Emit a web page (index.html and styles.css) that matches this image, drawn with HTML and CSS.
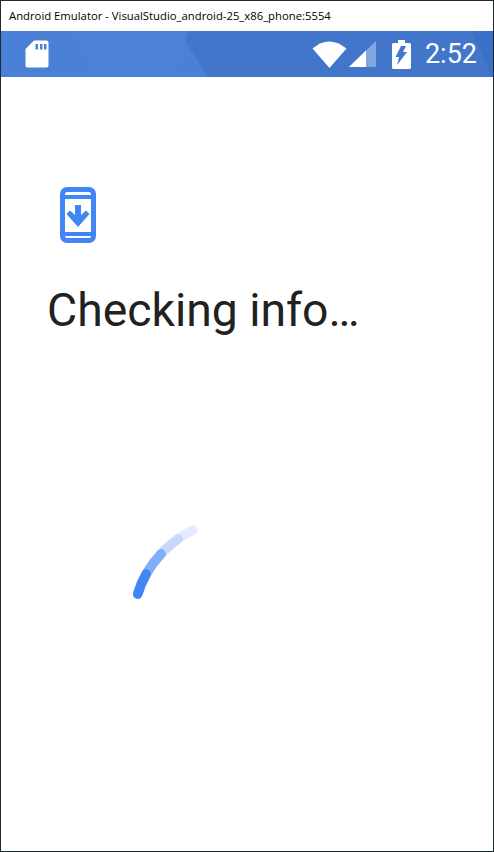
FILE: index.html
```html
<!DOCTYPE html>
<html lang="en">

<head>
    <meta charset="utf-8">
    <meta name="viewport" content="width=device-width, initial-scale=1.0">
    <title>Android Emulator</title>
    <link rel="stylesheet" href="styles.css">
</head>

<body>
    <div class="vindue">
        <!-- window title -->
        <div class="titel">Android Emulator - VisualStudio_android-25_x86_phone:5554</div>

        <!-- android status bar -->
        <div class="status">
            <svg class="status-bg" width="492" height="46" viewBox="0 0 492 46">
                <polygon points="73,0 188,0 176,46 90,46" fill="#4b81d8" />
                <polygon points="187,0 492,0 492,46 207,46 184,10" fill="#4176cb" />
                <polygon points="470,0 492,0 492,46" fill="#3c70c6" />
            </svg>
            <svg class="sd" width="24" height="28" viewBox="0 0 24 28">
                <path d="M9 0.5H21.5Q23.5 0.5 23.5 2.5V25.5Q23.5 27.5 21.5 27.5H2.5Q0.5 27.5 0.5 25.5V9Z" fill="#fff" />
                <path d="M10.5 4H13V9.5H10.5ZM15 4H17.5V9.5H15ZM19 4H21.5V9.5H19Z" fill="#4a80d6" />
            </svg>
            <div class="status-hoejre">
                <svg class="wifi" width="35" height="27" viewBox="0 0 35 27">
                    <path d="M0.5 7.5Q17 -6.5 34.5 7.5L17.500 27Z" fill="#fff" />
                </svg>
                <svg class="signal" width="28" height="27" viewBox="0 0 28 27">
                    <polygon points="0,26 27,0 27,26" fill="#fff" opacity="0.35" />
                    <polygon points="0,26 17,9.600 17,26" fill="#fff" />
                </svg>
                <svg class="batteri" width="19" height="29" viewBox="0 0 19 29">
                    <path d="M6 0H13V3H17.5Q19 3 19 4.500V27.500Q19 29 17.500 29H1.500Q0 29 0 27.500V4.500Q0 3 1.500 3H6Z" fill="#fff" />
                    <path d="M9 6H14L11 12H15L5 25L7 17H3.500Z" fill="#4277cc" />
                </svg>
                <span class="tid">2:52</span>
            </div>
        </div>

        <!-- checking screen -->
        <div class="indhold">
            <svg class="telefon" width="36" height="56" viewBox="0 0 36 56">
                <rect x="2.500" y="2.500" width="31" height="51" rx="4.500" fill="none" stroke="#4285f4" stroke-width="5" />
                <path d="M3 10H33M3 47H33" stroke="#4285f4" stroke-width="4" fill="none" />
                <path d="M15 18H21V28L26 23.500L29.500 27L18 40L6.500 27L10 23.500L15 28Z" fill="#4285f4" />
            </svg>
            <h1>Checking info…</h1>
            <svg class="spinner" width="72" height="78" viewBox="0 0 72 78">
                <!-- same arc four times, shorter and darker each time -->
                <g fill="none" stroke-width="9.500" stroke-linecap="round">
                    <path d="M4.700 69C12 44 32 19 60 5" pathLength="100" stroke="#e3ecfd" />
                    <path d="M4.700 69C12 44 32 19 60 5" pathLength="100" stroke="#c6d9fb" stroke-dasharray="80 200" />
                    <path d="M4.700 69C12 44 32 19 60 5" pathLength="100" stroke="#80aef8" stroke-dasharray="54 200" />
                    <path d="M4.700 69C12 44 32 19 60 5" pathLength="100" stroke="#4285f4" stroke-dasharray="25 200" />
                </g>
            </svg>
        </div>
    </div>
</body>

</html>
```

FILE: styles.css
```css
html,
body {
    margin: 0;
    padding: 0;
    background-color: #ffffff;
}

.vindue {
    box-sizing: border-box;
    width: 494px;
    height: 852px;
    border: 1px solid #1b2a33;
    border-top-color: #2a2433;
    overflow: hidden;
    background-color: #ffffff;
}

.titel {
    height: 30px;
    line-height: 30px;
    padding-left: 8px;
    font-family: "Open Sans", sans-serif;
    font-size: 11.3px;
    color: #000000;
    white-space: nowrap;
}

.status {
    position: relative;
    display: flex;
    align-items: center;
    justify-content: space-between;
    height: 46px;
    padding: 0 16px 0 24px;
    background-color: #4a80d6;
}

.status-bg {
    position: absolute;
    left: 0;
    top: 0;
}

.sd,
.status-hoejre {
    position: relative;
}

.status-hoejre {
    display: flex;
    align-items: center;
}

.wifi {
    margin-right: 2px;
}

.signal {
    margin-right: 15px;
}

.batteri {
    margin-right: 14px;
}

.tid {
    font-family: Roboto, sans-serif;
    font-size: 27px;
    color: #ffffff;
}

.indhold {
    display: flex;
    flex-direction: column;
    align-items: flex-start;
    padding: 110px 0 0 46px;
}

.telefon {
    margin-left: 13px;
}

h1 {
    margin: 41px 0 0 0;
    font-family: Roboto, sans-serif;
    font-size: 46.3px;
    line-height: 52px;
    font-weight: 400;
    color: #212121;
}

.spinner {
    margin: 189px 0 0 86px;
}
```
